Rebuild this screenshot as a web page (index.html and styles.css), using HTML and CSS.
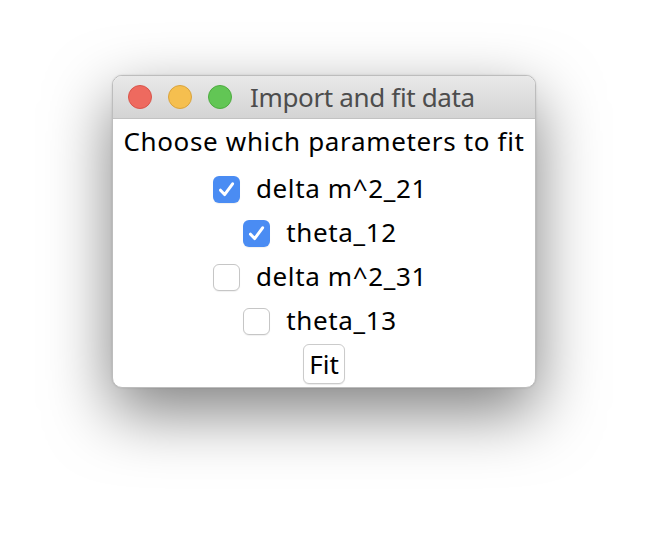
FILE: index.html
```html
<!DOCTYPE html>
<html>
<head>
<meta charset="utf-8">
<link rel="stylesheet" href="styles.css">
</head>
<body>
<div class="window">
  <div class="titlebar">
    <div class="lights">
      <span class="light red"></span>
      <span class="light yellow"></span>
      <span class="light green"></span>
    </div>
    <div class="title">Import and fit data</div>
  </div>
  <div class="content">
    <div class="heading">Choose which parameters to fit</div>
    <div class="rows">
      <label class="row">
        <span class="box checked"><svg viewBox="0 0 27 27" width="27" height="27"><path d="M7.5 14.2 L11.6 18.6 L19.6 7.8" fill="none" stroke="#fff" stroke-width="3" stroke-linecap="round" stroke-linejoin="round"/></svg></span>
        <span class="label">delta m^2_21</span>
      </label>
      <label class="row">
        <span class="box checked"><svg viewBox="0 0 27 27" width="27" height="27"><path d="M7.5 14.2 L11.6 18.6 L19.6 7.8" fill="none" stroke="#fff" stroke-width="3" stroke-linecap="round" stroke-linejoin="round"/></svg></span>
        <span class="label">theta_12</span>
      </label>
      <label class="row">
        <span class="box"></span>
        <span class="label">delta m^2_31</span>
      </label>
      <label class="row">
        <span class="box"></span>
        <span class="label">theta_13</span>
      </label>
    </div>
    <div class="actions">
      <button class="fit">Fit</button>
    </div>
  </div>
</div>
</body>
</html>
```

FILE: styles.css
```css
html, body {
  margin: 0;
  padding: 0;
  background: #ffffff;
}
body {
  width: 648px;
  height: 536px;
  overflow: hidden;
  padding: 75px 0 0 112px;
  box-sizing: border-box;
  font-family: "Noto Sans", "Liberation Sans", sans-serif;
}
.window {
  width: 424px;
  height: 313px;
  box-sizing: border-box;
  border: 1px solid #bdbdbd;
  border-radius: 10px;
  background: #ffffff;
  overflow: hidden;
  box-shadow: 0 24px 64px rgba(0, 0, 0, 0.5), 0 0 2px rgba(0, 0, 0, 0.15);
  display: flex;
  flex-direction: column;
}
.titlebar {
  height: 43px;
  flex: none;
  box-sizing: border-box;
  background: linear-gradient(#e9e9e9, #d4d4d4);
  border-bottom: 1px solid #c2c2c2;
  display: flex;
  align-items: center;
  padding-left: 15px;
}
.lights {
  display: flex;
  gap: 16px;
}
.light {
  width: 24px;
  height: 24px;
  border-radius: 50%;
  box-sizing: border-box;
}
.red { background: #ee6a5f; border: 1px solid #d8554b; }
.yellow { background: #f5bf4f; border: 1px solid #d9a33d; }
.green { background: #62c655; border: 1px solid #4eab40; }
.title {
  margin-left: 18px;
  font-size: 26px;
  letter-spacing: -0.35px;
  color: #4d4d4d;
  white-space: nowrap;
}
.content {
  flex: 1;
  display: flex;
  flex-direction: column;
  align-items: center;
  font-size: 26px;
  letter-spacing: 0.65px;
  color: #000;
}
.heading {
  height: 47px;
  line-height: 44px;
  white-space: nowrap;
}
.rows {
  display: flex;
  flex-direction: column;
  align-items: center;
  padding-right: 8px;
}
.row {
  height: 44px;
  display: flex;
  align-items: center;
  gap: 16px;
  white-space: nowrap;
}
.label {
  line-height: 44px;
}
.box {
  width: 27px;
  height: 27px;
  margin-top: 2px;
  box-sizing: border-box;
  border-radius: 6px;
  border: 1px solid #c6c6c6;
  background: #ffffff;
  box-shadow: 0 1px 1px rgba(0, 0, 0, 0.06);
  display: flex;
  align-items: center;
  justify-content: center;
  overflow: hidden;
}
.box.checked {
  border: none;
  background: #4a8cf3;
}
.box svg { display: block; }
.actions {
  margin-top: 2px;
  display: flex;
  justify-content: center;
}
.fit {
  width: 42px;
  height: 40px;
  padding: 0;
  box-sizing: border-box;
  border: 1px solid #cbcbcb;
  border-radius: 6px;
  background: #ffffff;
  box-shadow: 0 1px 1px rgba(0, 0, 0, 0.08);
  font-family: inherit;
  font-size: 26px;
  letter-spacing: 0;
  line-height: 38px;
  color: #000;
}
```
